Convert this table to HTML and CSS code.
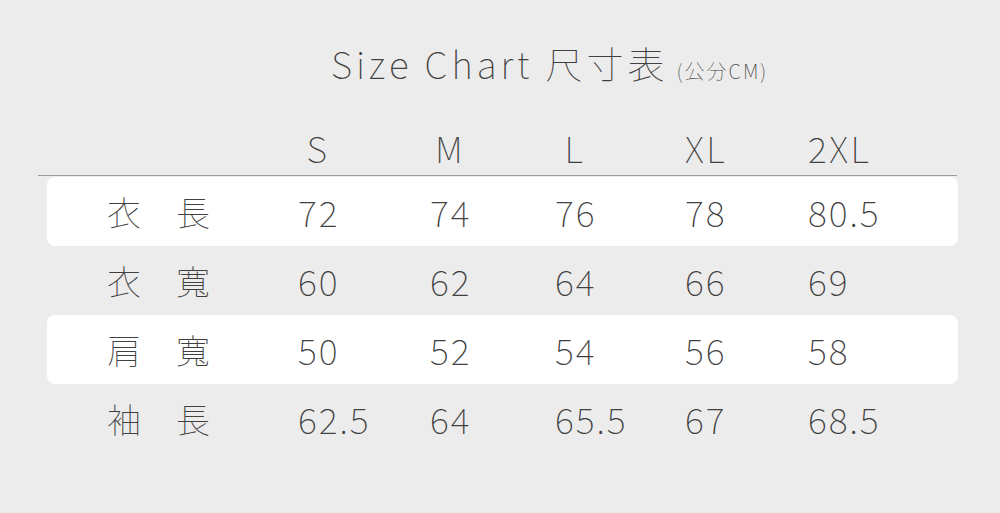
FILE: index.html
```html
<!DOCTYPE html>
<html>
<head>
<meta charset="utf-8">
<title>Size Chart</title>
<link rel="stylesheet" href="styles.css">
</head>
<body>
<div class="page">
  <h1 class="title"><span class="title-main">Size Chart 尺寸表</span><span class="title-unit">(公分CM)</span></h1>
  <div class="chart">
    <div class="head-row">
      <div class="cell-label"></div>
      <div class="hcell">S</div>
      <div class="hcell">M</div>
      <div class="hcell">L</div>
      <div class="hcell">XL</div>
      <div class="hcell">2XL</div>
    </div>
    <div class="row row-white">
      <div class="cell-label"><span>衣</span><span>長</span></div>
      <div class="vcell">72</div><div class="vcell">74</div><div class="vcell">76</div><div class="vcell">78</div><div class="vcell">80.5</div>
    </div>
    <div class="row">
      <div class="cell-label"><span>衣</span><span>寬</span></div>
      <div class="vcell">60</div><div class="vcell">62</div><div class="vcell">64</div><div class="vcell">66</div><div class="vcell">69</div>
    </div>
    <div class="row row-white">
      <div class="cell-label"><span>肩</span><span>寬</span></div>
      <div class="vcell">50</div><div class="vcell">52</div><div class="vcell">54</div><div class="vcell">56</div><div class="vcell">58</div>
    </div>
    <div class="row">
      <div class="cell-label"><span>袖</span><span>長</span></div>
      <div class="vcell">62.5</div><div class="vcell">64</div><div class="vcell">65.5</div><div class="vcell">67</div><div class="vcell">68.5</div>
    </div>
  </div>
</div>
</body>
</html>
```

FILE: styles.css
```css
html, body {
  margin: 0;
  padding: 0;
  background: #ececec;
}
body {
  font-family: "Noto Sans CJK JP", sans-serif;
  font-weight: 100;
  color: #404040;
  width: 1000px;
  height: 513px;
  overflow: hidden;
}
.page {
  padding-top: 38px;
}
.title {
  margin: 0;
  padding-left: 331px;
  display: flex;
  align-items: baseline;
  font-weight: 100;
  line-height: 50px;
}
.title-main {
  font-size: 37px;
  letter-spacing: 4px;
}
.title-unit {
  font-size: 20px;
  margin-left: 8px;
  letter-spacing: 2px;
}
.chart {
  margin-top: 27px;
}
.head-row {
  margin-left: 38px;
  width: 919px;
  display: grid;
  grid-template-columns: 260px 132px 125px 130px 123px 1fr;
  font-size: 36px;
  line-height: 48px;
  padding-bottom: 4px;
  border-bottom: 1px solid #9a9a9a;
}
.hcell {
  width: 40px;
  text-align: center;
  letter-spacing: 2.5px;
}
.row {
  margin-left: 47px;
  width: 911px;
  height: 69px;
  display: grid;
  grid-template-columns: 251px 132px 125px 130px 123px 1fr;
  align-items: center;
  font-size: 36px;
  line-height: 69px;
}
.row-white {
  background: #ffffff;
  border-radius: 8px;
}
.head-row + .row {
  margin-top: 1px;
}
.cell-label {
  padding-left: 60px;
  display: flex;
  gap: 35px;
  font-size: 34px;
}
.vcell {
  white-space: nowrap;
  letter-spacing: 2px;
}
```
